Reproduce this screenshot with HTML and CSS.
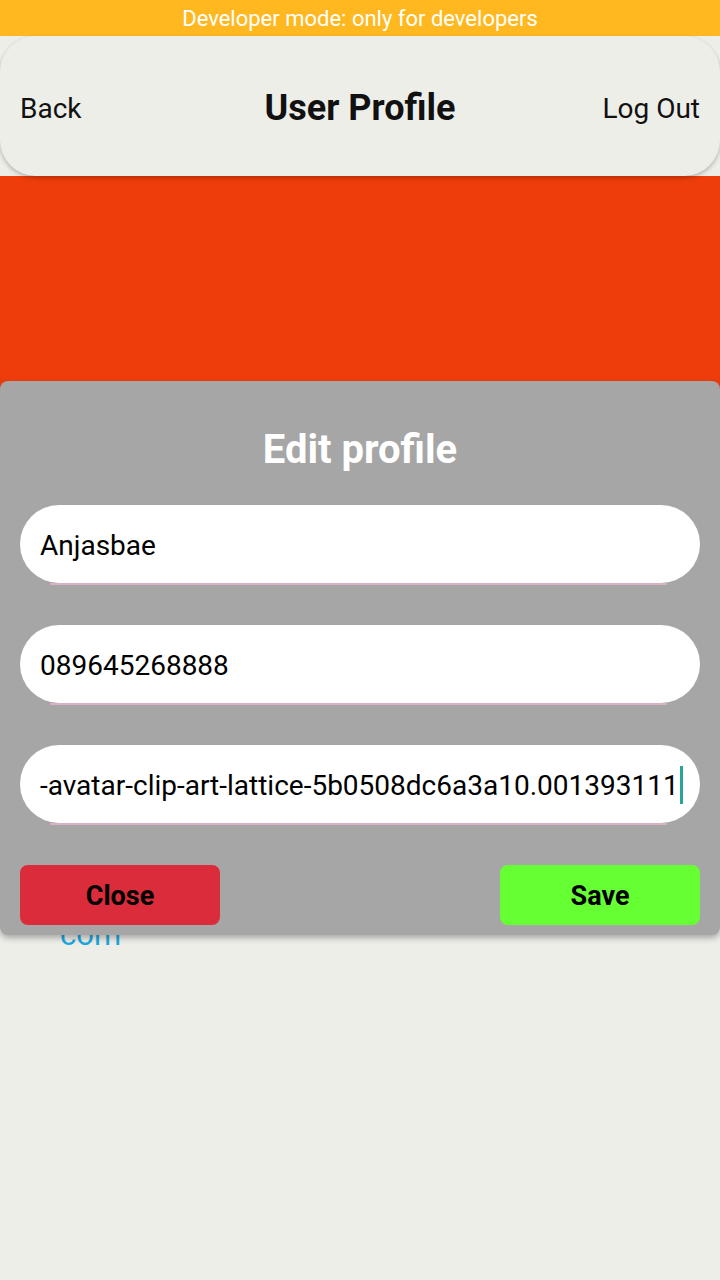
FILE: index.html
```html
<!DOCTYPE html>
<html>
<head>
<meta charset="utf-8">
<link rel="stylesheet" href="styles.css">
</head>
<body>
<div class="app">
  <div class="devbar">Developer mode: only for developers</div>
  <header class="topbar">
    <span class="nav-btn">Back</span>
    <h1 class="title">User Profile</h1>
    <span class="nav-btn nav-right">Log Out</span>
  </header>
  <div class="banner"></div>
  <div class="content">
    <div class="email">com</div>
  </div>

  <div class="modal">
    <h2 class="modal-title">Edit profile</h2>
    <div class="field"><span class="value">Anjasbae</span></div>
    <div class="field"><span class="value">089645268888</span></div>
    <div class="field"><span class="value">-avatar-clip-art-lattice-5b0508dc6a3a10.001393111</span><span class="caret"></span></div>
    <div class="actions">
      <button class="btn btn-close">Close</button>
      <button class="btn btn-save">Save</button>
    </div>
  </div>
</div>
</body>
</html>
```

FILE: styles.css
```css
* { box-sizing: border-box; }
html, body {
  margin: 0;
  padding: 0;
  background: #eeeee9;
  font-family: Roboto, "Noto Sans", sans-serif;
}
.app {
  position: relative;
  width: 720px;
  height: 1280px;
  overflow: hidden;
  background: #eeeee9;
}
.devbar {
  height: 36px;
  background: #ffb820;
  color: #ffffff;
  font-size: 22px;
  line-height: 38px;
  text-align: center;
}
.topbar {
  position: relative;
  z-index: 2;
  height: 140px;
  background: #eeeee9;
  border-radius: 36px;
  box-shadow: 0 2px 4px rgba(0,0,0,0.25);
  display: grid;
  grid-template-columns: 1fr auto 1fr;
  align-items: center;
  padding: 4px 20px 0;
}
.nav-btn {
  font-size: 28px;
  color: #111111;
}
.nav-right { justify-self: end; }
.title {
  margin: 0;
  font-size: 36px;
  font-weight: 700;
  color: #111111;
}
.banner {
  height: 400px;
  background: #ee3d0a;
}
.content {
  padding: 342px 0 0 60px;
}
.email {
  font-size: 31px;
  line-height: 34px;
  color: #1ba8e0;
}
.modal {
  position: absolute;
  left: 0;
  top: 381px;
  width: 720px;
  height: 554px;
  background: #a6a6a6;
  border-radius: 8px;
  box-shadow: 0 3px 6px rgba(0,0,0,0.3);
  padding: 0 20px;
  display: flex;
  flex-direction: column;
}
.modal-title {
  margin: 0;
  height: 124px;
  padding-top: 47px;
  font-size: 40px;
  font-weight: 700;
  color: #ffffff;
  text-align: center;
  line-height: 44px;
}
.field {
  position: relative;
  height: 78px;
  background: #ffffff;
  border-radius: 39px;
  display: flex;
  align-items: center;
  padding: 2px 20px 0;
  margin-bottom: 42px;
  font-size: 28px;
  color: #000000;
  white-space: nowrap;
}
.field::after {
  content: "";
  position: absolute;
  left: 30px;
  right: 33px;
  top: 100%;
  height: 2px;
  background: #d9b0c6;
}
.value { flex: none; }
.caret {
  flex: none;
  width: 3px;
  height: 38px;
  margin-left: 1px;
  background: #26a69a;
}
.actions {
  display: flex;
  justify-content: space-between;
}
.btn {
  width: 200px;
  height: 60px;
  border: none;
  border-radius: 8px;
  font-family: Roboto, sans-serif;
  font-size: 27px;
  font-weight: 700;
  color: #000000;
  padding: 2px 0 0;
}
.btn-close { background: #da2c3b; }
.btn-save { background: #66ff33; }
```
